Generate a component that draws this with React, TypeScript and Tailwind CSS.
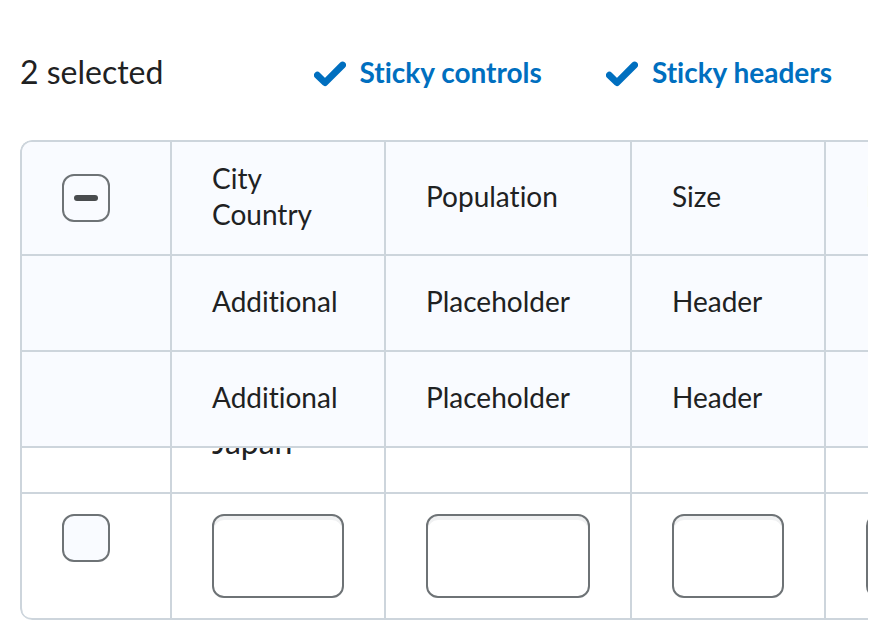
import { useEffect, useRef, useState } from 'react';

const headCell = 'border-b-2 border-r-2 border-[#cdd5dc] bg-[#f9fbff] px-10 pt-0 text-left font-normal';
const bodyCell = 'border-b-2 border-r-2 border-[#cdd5dc] px-10 align-top';
const checkbox =
  'grid size-12 appearance-none place-content-center rounded-xl border-2 border-[#6e7376] bg-[#f9fbff] indeterminate:before:h-1.5 indeterminate:before:w-6 indeterminate:before:rounded-full indeterminate:before:bg-[#494c4e]';

function CheckMark() {
  return (
    <svg viewBox="0 0 32 26" className="h-[26px] w-8" fill="none" aria-hidden="true">
      <path d="M3.4 14.2 L11 21.6 L28.6 4" stroke="currentColor" strokeWidth="6.8" strokeLinecap="round" strokeLinejoin="round" />
    </svg>
  );
}

function Toggle({ label }: { label: string }) {
  const [on, setOn] = useState(true);
  return (
    <button
      type="button"
      aria-pressed={on}
      onClick={() => setOn(!on)}
      className="flex items-center gap-3.5 font-bold text-[#006fbf]"
    >
      <CheckMark />
      <span className="pb-1">{label}</span>
    </button>
  );
}

export default function App() {
  const selectAll = useRef<HTMLInputElement>(null);
  useEffect(() => {
    if (selectAll.current) selectAll.current.indeterminate = true;
  }, []);

  return (
    <main className="overflow-hidden bg-white p-5 font-[Lato,sans-serif] text-[28px] leading-9 text-[#202122] [font-variant-ligatures:none]">
      <div className="flex h-[120px] items-center justify-between pr-9 pb-3">
        <span className="pb-1 text-[32px]">2 selected</span>
        <div className="flex gap-16">
          <Toggle label="Sticky controls" />
          <Toggle label="Sticky headers" />
        </div>
      </div>

      <div className="overflow-hidden rounded-l-xl">
        <table className="w-[1064px] table-fixed border-separate border-spacing-0 rounded-xl border-l-2 border-t-2 border-[#cdd5dc]">
          <colgroup>
            <col className="w-[150px]" />
            <col className="w-[214px]" />
            <col className="w-[246px]" />
            <col className="w-[194px]" />
            <col />
          </colgroup>
          <thead>
            <tr className="h-[114px]">
              <th className={`${headCell} rounded-tl-[10px] pb-0`}>
                <input ref={selectAll} type="checkbox" aria-label="Select all" className={checkbox} />
              </th>
              <th className={`${headCell} pb-1`}>City<br />Country</th>
              <th className={`${headCell} pb-1`}>Population</th>
              <th className={`${headCell} pb-1`}>Size</th>
              <th className={`${headCell} pb-1`}>Elevation</th>
            </tr>
            {[1, 2].map((n) => (
              <tr key={n} className="h-24">
                <th className={headCell} />
                <th className={`${headCell} pb-1`}>Additional</th>
                <th className={`${headCell} pb-1`}>Placeholder</th>
                <th className={`${headCell} pb-1`}>Header</th>
                <th className={headCell} />
              </tr>
            ))}
          </thead>
          <tbody>
            <tr>
              <td className={`${bodyCell} p-0`} />
              <td className={`${bodyCell} py-0`}>
                <div className="flex h-11 items-end overflow-hidden pb-8 text-[32px]">Japan</div>
              </td>
              <td className={`${bodyCell} p-0`} />
              <td className={`${bodyCell} p-0`} />
              <td className={`${bodyCell} p-0`} />
            </tr>
            <tr>
              <td className={`${bodyCell} rounded-bl-[10px] py-5`}>
                <input type="checkbox" aria-label="Select row" className={checkbox} />
              </td>
              {['City', 'Population', 'Size', 'Elevation'].map((name) => (
                <td key={name} className={`${bodyCell} py-5`}>
                  <input
                    type="text"
                    aria-label={name}
                    className="block h-21 w-full rounded-xl border-2 border-[#6e7376] bg-white px-5 shadow-[inset_0_4px_0_#f0f1f2]"
                  />
                </td>
              ))}
            </tr>
          </tbody>
        </table>
      </div>
    </main>
  );
}
